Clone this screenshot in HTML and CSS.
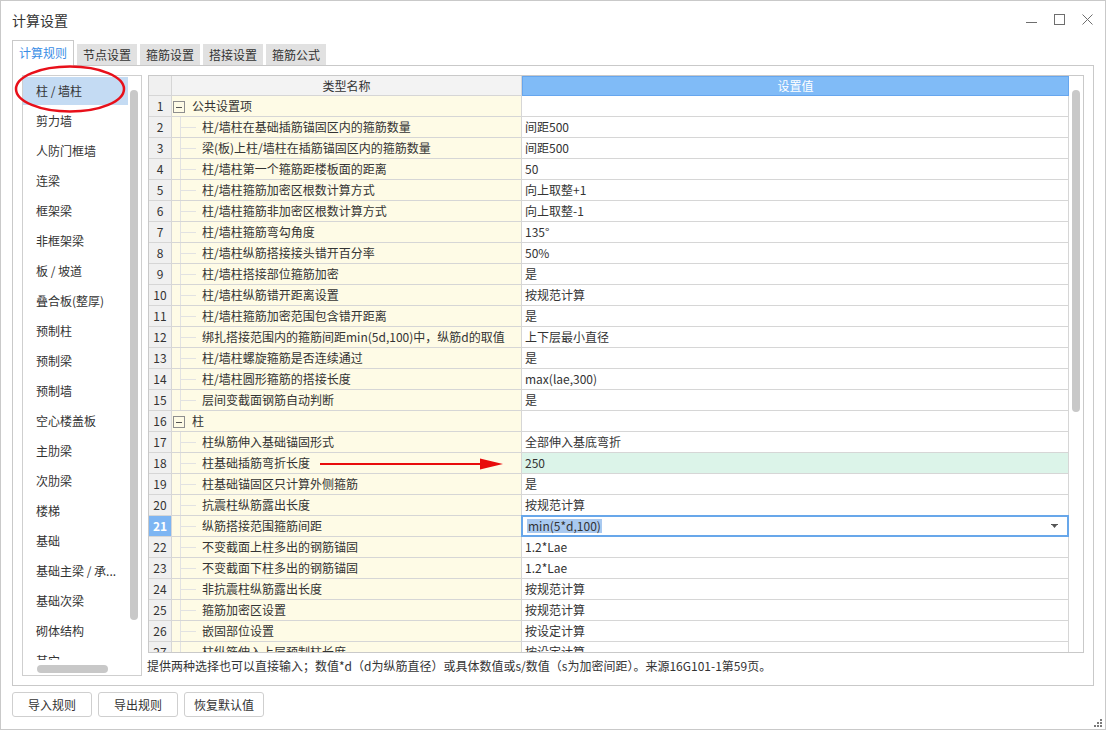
FILE: index.html
```html
<!DOCTYPE html>
<html lang="zh-CN">
<head>
<meta charset="utf-8">
<title>计算设置</title>
<link rel="stylesheet" href="styles.css">
</head>
<body>
<div class="window">
  <div class="titlebar">
    <span class="title">计算设置</span>
    <div class="controls">
      <svg viewBox="0 0 11 11"><path d="M0 8.5H11" stroke="#6e6e6e" stroke-width="1"/></svg>
      <svg viewBox="0 0 11 11"><rect x="0.5" y="0.5" width="10" height="10" fill="none" stroke="#6e6e6e" stroke-width="1"/></svg>
      <svg viewBox="0 0 11 11"><path d="M0.5 0.5L10.5 10.5M10.5 0.5L0.5 10.5" stroke="#6e6e6e" stroke-width="1"/></svg>
    </div>
  </div>

  <div class="tabs">
    <div class="tab active">计算规则</div>
    <div class="tab">节点设置</div>
    <div class="tab">箍筋设置</div>
    <div class="tab">搭接设置</div>
    <div class="tab">箍筋公式</div>
  </div>

  <div class="panel">
    <div class="list">
      <div class="items">
        <div class="item sel">柱 / 墙柱</div>
        <div class="item">剪力墙</div>
        <div class="item">人防门框墙</div>
        <div class="item">连梁</div>
        <div class="item">框架梁</div>
        <div class="item">非框架梁</div>
        <div class="item">板 / 坡道</div>
        <div class="item">叠合板(整厚)</div>
        <div class="item">预制柱</div>
        <div class="item">预制梁</div>
        <div class="item">预制墙</div>
        <div class="item">空心楼盖板</div>
        <div class="item">主肋梁</div>
        <div class="item">次肋梁</div>
        <div class="item">楼梯</div>
        <div class="item">基础</div>
        <div class="item">基础主梁 / 承...</div>
        <div class="item">基础次梁</div>
        <div class="item">砌体结构</div>
        <div class="item">其它</div>
      </div>
      <div class="vscroll"><div class="vthumb"></div></div>
      <div class="hscroll"><div class="hthumb"></div></div>
    </div>

    <div class="main">
      <div class="gridbox">
        <div class="grid">
          <div class="row hdr"><div class="cell num"></div><div class="cell name">类型名称</div><div class="cell val">设置值</div></div>
          <div class="row"><div class="cell num">1</div><div class="cell name"><span class="toggle"></span><span class="glabel">公共设置项</span></div><div class="cell val"></div></div>
          <div class="row"><div class="cell num">2</div><div class="cell name"><span class="branch"></span><span class="label">柱/墙柱在基础插筋锚固区内的箍筋数量</span></div><div class="cell val">间距500</div></div>
          <div class="row"><div class="cell num">3</div><div class="cell name"><span class="branch"></span><span class="label">梁(板)上柱/墙柱在插筋锚固区内的箍筋数量</span></div><div class="cell val">间距500</div></div>
          <div class="row"><div class="cell num">4</div><div class="cell name"><span class="branch"></span><span class="label">柱/墙柱第一个箍筋距楼板面的距离</span></div><div class="cell val">50</div></div>
          <div class="row"><div class="cell num">5</div><div class="cell name"><span class="branch"></span><span class="label">柱/墙柱箍筋加密区根数计算方式</span></div><div class="cell val">向上取整+1</div></div>
          <div class="row"><div class="cell num">6</div><div class="cell name"><span class="branch"></span><span class="label">柱/墙柱箍筋非加密区根数计算方式</span></div><div class="cell val">向上取整-1</div></div>
          <div class="row"><div class="cell num">7</div><div class="cell name"><span class="branch"></span><span class="label">柱/墙柱箍筋弯勾角度</span></div><div class="cell val">135°</div></div>
          <div class="row"><div class="cell num">8</div><div class="cell name"><span class="branch"></span><span class="label">柱/墙柱纵筋搭接接头错开百分率</span></div><div class="cell val">50%</div></div>
          <div class="row"><div class="cell num">9</div><div class="cell name"><span class="branch"></span><span class="label">柱/墙柱搭接部位箍筋加密</span></div><div class="cell val">是</div></div>
          <div class="row"><div class="cell num">10</div><div class="cell name"><span class="branch"></span><span class="label">柱/墙柱纵筋错开距离设置</span></div><div class="cell val">按规范计算</div></div>
          <div class="row"><div class="cell num">11</div><div class="cell name"><span class="branch"></span><span class="label">柱/墙柱箍筋加密范围包含错开距离</span></div><div class="cell val">是</div></div>
          <div class="row"><div class="cell num">12</div><div class="cell name"><span class="branch"></span><span class="label">绑扎搭接范围内的箍筋间距min(5d,100)中，纵筋d的取值</span></div><div class="cell val">上下层最小直径</div></div>
          <div class="row"><div class="cell num">13</div><div class="cell name"><span class="branch"></span><span class="label">柱/墙柱螺旋箍筋是否连续通过</span></div><div class="cell val">是</div></div>
          <div class="row"><div class="cell num">14</div><div class="cell name"><span class="branch"></span><span class="label">柱/墙柱圆形箍筋的搭接长度</span></div><div class="cell val">max(lae,300)</div></div>
          <div class="row"><div class="cell num">15</div><div class="cell name"><span class="branch"></span><span class="label">层间变截面钢筋自动判断</span></div><div class="cell val">是</div></div>
          <div class="row"><div class="cell num">16</div><div class="cell name"><span class="toggle"></span><span class="glabel">柱</span></div><div class="cell val"></div></div>
          <div class="row"><div class="cell num">17</div><div class="cell name"><span class="branch"></span><span class="label">柱纵筋伸入基础锚固形式</span></div><div class="cell val">全部伸入基底弯折</div></div>
          <div class="row"><div class="cell num">18</div><div class="cell name"><span class="branch"></span><span class="label">柱基础插筋弯折长度</span></div><div class="cell val changed">250</div></div>
          <div class="row"><div class="cell num">19</div><div class="cell name"><span class="branch"></span><span class="label">柱基础锚固区只计算外侧箍筋</span></div><div class="cell val">是</div></div>
          <div class="row"><div class="cell num">20</div><div class="cell name"><span class="branch"></span><span class="label">抗震柱纵筋露出长度</span></div><div class="cell val">按规范计算</div></div>
          <div class="row"><div class="cell num cur">21</div><div class="cell name"><span class="branch"></span><span class="label">纵筋搭接范围箍筋间距</span></div><div class="cell val edit"><span class="seltext">min(5*d,100)</span><svg class="drop" viewBox="0 0 7 4"><path d="M0 0H7V1H6L3.5 4L1 1H0Z" fill="#555"/></svg></div></div>
          <div class="row"><div class="cell num">22</div><div class="cell name"><span class="branch"></span><span class="label">不变截面上柱多出的钢筋锚固</span></div><div class="cell val">1.2*Lae</div></div>
          <div class="row"><div class="cell num">23</div><div class="cell name"><span class="branch"></span><span class="label">不变截面下柱多出的钢筋锚固</span></div><div class="cell val">1.2*Lae</div></div>
          <div class="row"><div class="cell num">24</div><div class="cell name"><span class="branch"></span><span class="label">非抗震柱纵筋露出长度</span></div><div class="cell val">按规范计算</div></div>
          <div class="row"><div class="cell num">25</div><div class="cell name"><span class="branch"></span><span class="label">箍筋加密区设置</span></div><div class="cell val">按规范计算</div></div>
          <div class="row"><div class="cell num">26</div><div class="cell name"><span class="branch"></span><span class="label">嵌固部位设置</span></div><div class="cell val">按设定计算</div></div>
          <div class="row"><div class="cell num">27</div><div class="cell name"><span class="branch"></span><span class="label">柱纵筋伸入上层预制柱长度</span></div><div class="cell val">按设定计算</div></div>
        </div>
        <div class="gscroll"><div class="gthumb"></div></div>
      </div>
      <div class="hint">提供两种选择也可以直接输入；数值*d（d为纵筋直径）或具体数值或s/数值（s为加密间距）。来源16G101-1第59页。</div>
    </div>
  </div>

  <div class="buttons">
    <button class="btn">导入规则</button>
    <button class="btn">导出规则</button>
    <button class="btn">恢复默认值</button>
  </div>

  <svg class="grip" viewBox="0 0 8 8">
    <rect x="6" y="0" width="2" height="2" fill="#7a7a7a"/>
    <rect x="3" y="3" width="2" height="2" fill="#7a7a7a"/>
    <rect x="6" y="3" width="2" height="2" fill="#7a7a7a"/>
    <rect x="0" y="6" width="2" height="2" fill="#7a7a7a"/>
    <rect x="3" y="6" width="2" height="2" fill="#7a7a7a"/>
    <rect x="6" y="6" width="2" height="2" fill="#7a7a7a"/>
  </svg>

  <svg class="annot" viewBox="0 0 1106 730">
    <ellipse cx="70" cy="89" rx="54" ry="22.5" fill="none" stroke="#e8101a" stroke-width="2.5"/>
    <line x1="320" y1="464" x2="484" y2="464" stroke="#e80c0c" stroke-width="2"/>
    <polygon points="480,458.5 503,464 480,469.5" fill="#e80c0c"/>
  </svg>
</div>
</body>
</html>
```

FILE: styles.css
```css
* { box-sizing: border-box; }

html, body {
  margin: 0;
  padding: 0;
  background: #fff;
}

body {
  font-family: "Noto Sans CJK SC", "Noto Sans", sans-serif;
  font-size: 12px;
  color: #333;
}

.window {
  position: relative;
  width: 1106px;
  height: 730px;
  border: 1px solid #c9c9c9;
  display: flex;
  flex-direction: column;
  overflow: hidden;
  background: #fff;
}

/* title bar */
.titlebar {
  height: 39px;
  flex: none;
  display: flex;
  justify-content: space-between;
  align-items: flex-start;
  padding: 0 12px 0 11px;
}

.title {
  font-size: 14px;
  line-height: 20px;
  margin-top: 9px;
  color: #333;
}

.controls {
  display: flex;
  gap: 17px;
  margin-top: 13px;
}

.controls svg {
  display: block;
  width: 11px;
  height: 11px;
}

/* tabs */
.tabs {
  height: 25px;
  flex: none;
  display: flex;
  align-items: flex-end;
  gap: 3px;
  padding-left: 11px;
}

.tab {
  width: 60px;
  height: 21px;
  line-height: 21px;
  text-align: center;
  background: #e1e1e1;
  color: #333;
}

.tab.active {
  width: 62px;
  height: 26px;
  line-height: 24px;
  margin-bottom: -1px;
  background: #fff;
  border: 1px solid #c9c9c9;
  border-bottom: none;
  color: #3a8ee6;
  position: relative;
  z-index: 1;
}

/* panel */
.panel {
  flex: none;
  margin-left: 11px;
  width: 1082px;
  height: 621px;
  border: 1px solid #c9c9c9;
  padding: 9px;
  display: flex;
  gap: 6px;
}

/* left list */
.list {
  width: 120px;
  height: 601px;
  flex: none;
  border: 1px solid #cfcfcf;
  display: grid;
  grid-template-columns: 105px 13px;
  grid-template-rows: 584px 15px;
}

.items {
  overflow: hidden;
  padding-top: 1px;
}

.item {
  height: 28px;
  line-height: 28px;
  margin-bottom: 2px;
  padding-left: 13px;
  white-space: nowrap;
  color: #333;
}

.item.sel {
  background: #c4dbf3;
}

.vthumb {
  margin: 14px 0 0 2px;
  width: 8px;
  height: 530px;
  border-radius: 4px;
  background: #c8c8c8;
}

.hthumb {
  margin: 5px 0 0 14px;
  width: 71px;
  height: 8px;
  border-radius: 4px;
  background: #c8c8c8;
}

/* main grid */
.main {
  width: 936px;
  flex: none;
  display: flex;
  flex-direction: column;
}

.gridbox {
  height: 578px;
  flex: none;
  border: 1px solid #c9c9c9;
  display: flex;
  overflow: hidden;
}

.grid {
  width: 920px;
  flex: none;
  overflow: hidden;
}

.row {
  display: flex;
  height: 21px;
}

.row.hdr {
  height: 20px;
}

.cell {
  border-right: 1px solid #d6d6d6;
  border-bottom: 1px solid #d6d6d6;
  line-height: 20px;
  white-space: nowrap;
  overflow: hidden;
  flex: none;
}

.hdr .cell {
  line-height: 19px;
}

.num {
  width: 23px;
  background: #f0f0f0;
  text-align: center;
  color: #333;
}

.num.cur {
  background: #7db5f3;
  color: #fff;
  font-weight: bold;
}

.name {
  width: 350px;
  background: #fefbe6;
  display: flex;
  align-items: stretch;
}

.hdr .name {
  background: #f3f3f3;
  justify-content: center;
}

.val {
  width: 547px;
  padding-left: 3px;
  background: #fff;
}

.hdr .val {
  background: #80bbf7;
  border: 1px solid #66a6ee;
  color: #fff;
  text-align: center;
  padding-left: 0;
  line-height: 18px;
}

.val.changed {
  background: #dcf4e9;
}

.val.edit {
  width: 548px;
  height: 22px;
  margin: -1px 0 0 -1px;
  border: 2px solid #68a7ea;
  padding: 0 9px 0 4px;
  display: flex;
  align-items: center;
  justify-content: space-between;
  line-height: 14px;
  position: relative;
  z-index: 1;
}

.seltext {
  background: #a9c9f0;
  padding: 0 1px;
}

.drop {
  width: 7px;
  height: 4px;
  display: block;
}

.toggle {
  flex: none;
  width: 12px;
  height: 12px;
  margin: 5px 0 0 1px;
  border: 1px solid #8e8e8e;
  background: linear-gradient(#555, #555) no-repeat center / 6px 1px;
}

.glabel {
  margin-left: 7px;
}

.branch {
  flex: none;
  width: 16px;
  margin-left: 8px;
  border-left: 1px solid #e2e2e2;
  background: linear-gradient(#e2e2e2, #e2e2e2) no-repeat 0 10px / 100% 1px;
}

.label {
  margin-left: 6px;
}

.gscroll {
  width: 14px;
  flex: none;
}

.gthumb {
  margin: 14px 0 0 3px;
  width: 8px;
  height: 322px;
  border-radius: 4px;
  background: #c8c8c8;
}

.hint {
  padding-top: 3px;
  margin-left: -1px;
  line-height: 20px;
  white-space: nowrap;
  color: #333;
}

/* buttons */
.buttons {
  flex: none;
  display: flex;
  gap: 6px;
  margin: 6px 0 0 11px;
}

.btn {
  width: 80px;
  height: 25px;
  border: 1px solid #cfcfcf;
  border-radius: 3px;
  background: #fff;
  font-family: inherit;
  font-size: 12px;
  color: #333;
  padding: 0;
}

.grip {
  position: absolute;
  right: 3px;
  bottom: 2px;
  width: 8px;
  height: 8px;
}

.annot {
  position: absolute;
  left: -1px;
  top: -1px;
  width: 1106px;
  height: 730px;
  pointer-events: none;
  z-index: 5;
}
```
